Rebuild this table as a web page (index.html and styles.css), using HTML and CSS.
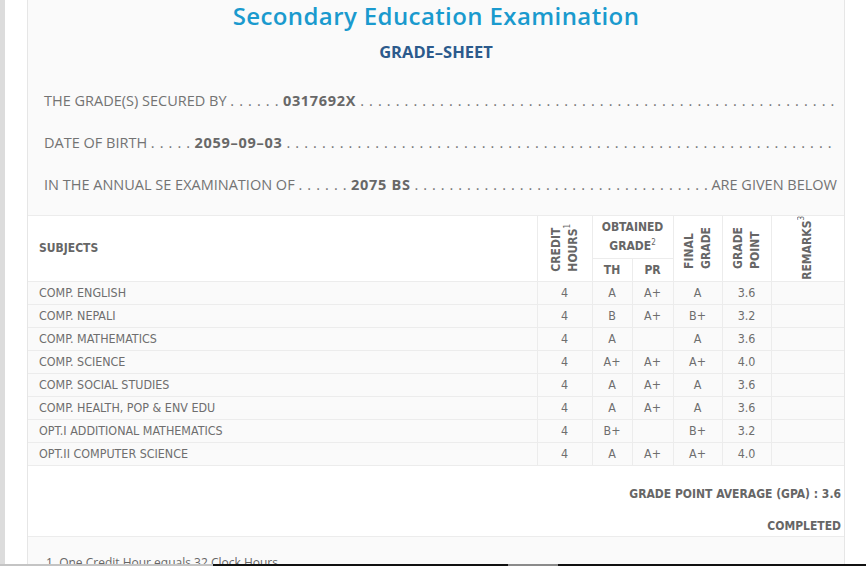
FILE: index.html
```html
<!DOCTYPE html>
<html>
<head>
<meta charset="utf-8">
<link rel="stylesheet" href="styles.css">
</head>
<body>
<div class="strip"></div>
<div class="page">
  <div class="panel">
    <header class="head">
      <h1 class="title">Secondary Education Examination</h1>
      <h2 class="subtitle">GRADE–SHEET</h2>
      <div class="lines">
        <p class="line"><span class="lbl">THE GRADE(S) SECURED BY <span class="dots">. . . . . .</span> <b class="val">0317692X</b></span><span class="fill">. . . . . . . . . . . . . . . . . . . . . . . . . . . . . . . . . . . . . . . . . . . . . . . . . . . . . . . . . . . . . . . . . . . . . . . . . . . . . . . . . . . . . . . . . . . . . . . . . . . . . . . . .</span></p>
        <p class="line"><span class="lbl">DATE OF BIRTH <span class="dots">. . . . .</span> <b class="val">2059–09–03</b></span><span class="fill">. . . . . . . . . . . . . . . . . . . . . . . . . . . . . . . . . . . . . . . . . . . . . . . . . . . . . . . . . . . . . . . . . . . . . . . . . . . . . . . . . . . . . . . . . . . . . . . . . . . . . . . . . . . . . .</span></p>
        <p class="line"><span class="lbl">IN THE ANNUAL SE EXAMINATION OF <span class="dots">. . . . . .</span> <b class="val">2075 BS</b></span><span class="fill fill-end"><span>. . . . . . . . . . . . . . . . . . . . . . . . . . . . . . . . . . . . . . . . . . . . . . . . . . . . . . . . . . . . . . . . . . . . . . . . . . . . . . . . . . . . . . . . . . . . . . . . . . . . . . . . . . . . . .</span></span><span class="end">ARE GIVEN BELOW</span></p>
      </div>
    </header>

    <table class="grades">
      <colgroup>
        <col class="c-sub"><col class="c-cr"><col class="c-th"><col class="c-pr"><col class="c-fg"><col class="c-gp"><col class="c-rm">
      </colgroup>
      <thead>
        <tr class="h1">
          <th rowspan="2" class="subj">SUBJECTS</th>
          <th rowspan="2"><div class="vcell"><span class="vert">CREDIT<br>HOURS<sup>1</sup></span></div></th>
          <th colspan="2" class="obt">OBTAINED<br>GRADE<sup>2</sup></th>
          <th rowspan="2"><div class="vcell"><span class="vert">FINAL<br>GRADE</span></div></th>
          <th rowspan="2"><div class="vcell"><span class="vert">GRADE<br>POINT</span></div></th>
          <th rowspan="2"><div class="vcell"><span class="vert">REMARKS<sup>3</sup></span></div></th>
        </tr>
        <tr class="h2">
          <th>TH</th>
          <th>PR</th>
        </tr>
      </thead>
      <tbody>
        <tr><td class="subj">COMP. ENGLISH</td><td>4</td><td>A</td><td>A+</td><td>A</td><td>3.6</td><td></td></tr>
        <tr><td class="subj">COMP. NEPALI</td><td>4</td><td>B</td><td>A+</td><td>B+</td><td>3.2</td><td></td></tr>
        <tr><td class="subj">COMP. MATHEMATICS</td><td>4</td><td>A</td><td></td><td>A</td><td>3.6</td><td></td></tr>
        <tr><td class="subj">COMP. SCIENCE</td><td>4</td><td>A+</td><td>A+</td><td>A+</td><td>4.0</td><td></td></tr>
        <tr><td class="subj">COMP. SOCIAL STUDIES</td><td>4</td><td>A</td><td>A+</td><td>A</td><td>3.6</td><td></td></tr>
        <tr><td class="subj">COMP. HEALTH, POP &amp; ENV EDU</td><td>4</td><td>A</td><td>A+</td><td>A</td><td>3.6</td><td></td></tr>
        <tr><td class="subj">OPT.I ADDITIONAL MATHEMATICS</td><td>4</td><td>B+</td><td></td><td>B+</td><td>3.2</td><td></td></tr>
        <tr><td class="subj">OPT.II COMPUTER SCIENCE</td><td>4</td><td>A</td><td>A+</td><td>A+</td><td>4.0</td><td></td></tr>
      </tbody>
    </table>

    <div class="summary">
      <p>GRADE POINT AVERAGE (GPA) : 3.6</p>
      <p class="done">COMPLETED</p>
    </div>

    <div class="notes">
      <p>1. One Credit Hour equals 32 Clock Hours</p>
    </div>
  </div>
</div>
<div class="edge"></div>
</body>
</html>
```

FILE: styles.css
```css
* { box-sizing: border-box; }
html, body { margin: 0; height: 100%; }
body {
  background: #fff;
  display: flex;
  overflow: hidden;
  font-family: "Open Sans", "DejaVu Sans", sans-serif;
}
.strip { flex: none; width: 5px; background: #dcdcdc; }
.page { flex: none; padding-left: 22px; }
.panel {
  width: 818px;
  min-height: 100%;
  background: #fafafa;
  border-left: 1px solid #e6e6e6;
  border-right: 1px solid #e6e6e6;
}
.head { padding-bottom: 20px; border-bottom: 1px solid #ececec; }
.title {
  margin: 0;
  text-align: center;
  font-size: 24px;
  line-height: 32px;
  font-weight: 600;
  letter-spacing: .4px;
  color: #1a9ace;
}
.subtitle {
  margin: 10px 0 0;
  text-align: center;
  font-size: 16.5px;
  line-height: 20px;
  font-weight: 700;
  color: #2c5a8c;
}
.lines {
  margin-top: 29px;
  padding: 0 7px 0 16px;
  display: flex;
  flex-direction: column;
  gap: 22px;
}
.line {
  margin: 0;
  display: flex;
  white-space: nowrap;
  font-size: 14.5px;
  line-height: 20px;
  color: #737373;
}
.lbl { flex: none; }
.dots, .fill { letter-spacing: .65px; }
.fill { flex: 1; min-width: 0; overflow: hidden; padding-left: 4px; }
.fill-end {
  padding-left: 0;
  letter-spacing: .6px;
  display: flex;
  justify-content: flex-end;
}
.fill-end > span { flex: none; }
.val { font-weight: 700; letter-spacing: .7px; color: #686868; }
.end { flex: none; padding-left: 3px; }

.grades {
  width: 816px;
  border-collapse: collapse;
  border-style: hidden;
  table-layout: fixed;
  font-family: "DejaVu Sans Condensed", "DejaVu Sans", sans-serif;
  font-size: 12px;
  color: #6e6e6e;
}
.c-sub { width: 509px; }
.c-cr { width: 55px; }
.c-th { width: 40px; }
.c-pr { width: 41px; }
.c-fg { width: 49px; }
.c-gp { width: 49px; }
.c-rm { width: 73px; }
.grades th, .grades td {
  border: 1px solid #ececec;
  padding: 0;
  text-align: center;
  vertical-align: middle;
}
.grades thead { background: #fff; }
.grades th { font-weight: 700; color: #666; }
.grades .subj { text-align: left; padding-left: 11px; }
.grades tbody td { height: 23px; line-height: 14px; font-size: 12.4px; }
.h1 > th { height: 42px; }
.h2 > th { height: 23px; }
.obt { line-height: 19px; }
.vcell {
  height: 64px;
  display: flex;
  align-items: center;
  justify-content: center;
}
.vert {
  writing-mode: vertical-rl;
  transform: rotate(180deg);
  line-height: 17px;
  white-space: nowrap;
  text-align: start;
}
sup { font-size: 8px; line-height: 0; vertical-align: super; font-weight: 400; }

.summary {
  background: #fff;
  border-top: 1px solid #ececec;
  border-bottom: 1px solid #ececec;
  padding: 18px 3px 0 0;
  text-align: right;
  font-family: "DejaVu Sans Condensed", "DejaVu Sans", sans-serif;
  font-size: 12px;
  font-weight: 700;
  color: #666;
}
.summary p { margin: 0; line-height: 20px; }
.summary .done { margin-top: 12px; }

.notes { padding: 18px 0 0 18px; }
.notes p {
  margin: 0;
  font-size: 12px;
  line-height: 16px;
  color: #666;
}

.edge {
  position: fixed;
  left: 0;
  right: 0;
  bottom: 0;
  height: 2px;
  background: linear-gradient(to right, #c4c4c4 0, #c4c4c4 213px, #111 213px, #111 508px, #8a8a8a 508px, #8a8a8a 558px, #111 558px);
}
```
